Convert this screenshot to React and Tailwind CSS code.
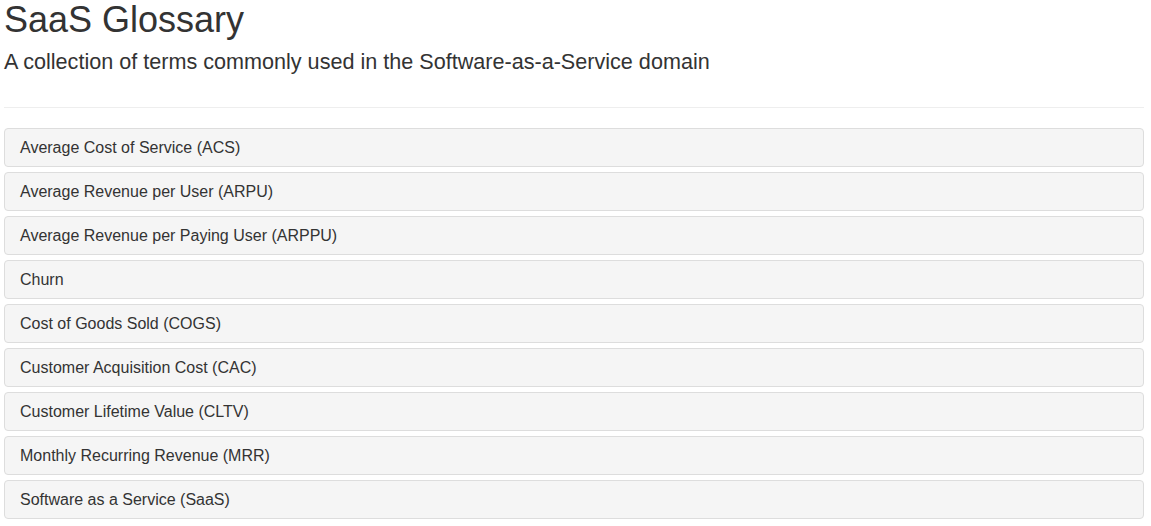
export default function App() {
  const terms = [
    "Average Cost of Service (ACS)",
    "Average Revenue per User (ARPU)",
    "Average Revenue per Paying User (ARPPU)",
    "Churn",
    "Cost of Goods Sold (COGS)",
    "Customer Acquisition Cost (CAC)",
    "Customer Lifetime Value (CLTV)",
    "Monthly Recurring Revenue (MRR)",
    "Software as a Service (SaaS)",
  ];
  return (
    <div className="w-[1140px] ml-[4px] text-[#333]" style={{ fontFamily: '"Liberation Sans", Arial, sans-serif' }}>
      <h1 className="text-[36px] leading-[1.1] m-0 pt-0">SaaS Glossary</h1>
      <p className="text-[21.6px] leading-[24px] mt-[10px]">A collection of terms commonly used in the Software-as-a-Service domain</p>
      <hr className="mt-[33px] mb-[20px] border-t border-[#eee]" />
      <div className="flex flex-col gap-[5px]">
        {terms.map((t) => (
          <div key={t} className="border border-[#ddd] rounded-[4px] bg-[#f5f5f5] px-[15px] py-[10px] text-[16px] leading-[17px]">
            {t}
          </div>
        ))}
      </div>
    </div>
  );
}
